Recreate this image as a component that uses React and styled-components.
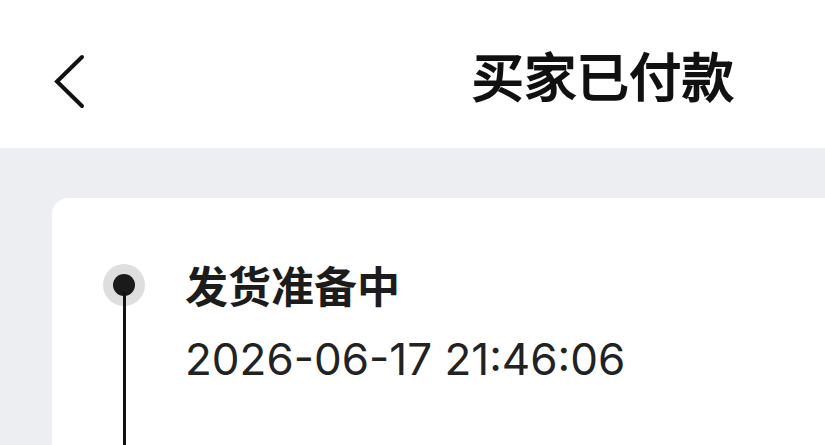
import React from 'react';
import styled, { createGlobalStyle } from 'styled-components';

const GlobalStyle = createGlobalStyle`
  html, body {
    margin: 0;
    padding: 0;
    background: #edeef1;
    overflow: hidden;
  }
  body {
    font-family: Inter, "Noto Sans CJK SC", sans-serif;
    color: #1a1a1a;
  }
`;

const Page = styled.div`
  width: 1206px;
  min-height: 445px;
  background: #edeef1;
`;

const Header = styled.header`
  height: 148px;
  background: #ffffff;
  display: grid;
  grid-template-columns: 1fr auto 1fr;
  align-items: center;
`;

const BackButton = styled.button`
  justify-self: start;
  display: flex;
  align-items: center;
  margin: 16px 0 0 54px;
  padding: 0;
  border: none;
  background: none;
  cursor: pointer;
`;

const Title = styled.h1`
  margin: 0;
  font-family: "Noto Sans CJK SC", sans-serif;
  font-size: 52px;
  font-weight: 400;
  -webkit-text-stroke: 2px #111;
  color: #111;
  letter-spacing: 0.5px;
`;

const Body = styled.main`
  padding: 50px 0 0 52px;
`;

const Card = styled.section`
  background: #ffffff;
  border-radius: 16px;
  padding: 66px 0 0 51px;
`;

const Step = styled.div`
  display: grid;
  grid-template-columns: 42px 1fr;
  column-gap: 40px;
`;

const Marker = styled.div`
  display: flex;
  flex-direction: column;
  align-items: center;
`;

const Ring = styled.div`
  width: 42px;
  height: 42px;
  border-radius: 50%;
  background: ${p => (p.$active ? '#dedede' : 'transparent')};
  display: flex;
  align-items: center;
  justify-content: center;
  flex: none;
`;

const Dot = styled.div`
  width: 22px;
  height: 22px;
  border-radius: 50%;
  background: #1a1a1a;
`;

const Line = styled.div`
  width: 3px;
  flex: 1;
  margin-top: -14px;
  background: #111;
`;

const Content = styled.div`
  padding-bottom: 90px;
`;

const StepTitle = styled.div`
  font-family: "Noto Sans CJK SC", sans-serif;
  font-size: 43px;
  font-weight: 700;
  line-height: 40px;
  color: #1c1c1c;
`;

const StepTime = styled.div`
  margin-top: 35px;
  font-size: 44px;
  line-height: 40px;
  color: #222;
`;

const ChevronLeft = () => (
  <svg width="32" height="56" viewBox="0 0 32 56" fill="none">
    <polyline
      points="28,3 3,27.5 28,52"
      stroke="#111"
      strokeWidth="4"
      strokeLinecap="round"
      strokeLinejoin="miter"
    />
  </svg>
);

const steps = [
  { title: '发货准备中', time: '2026-06-17 21:46:06', active: true },
];

export default function App() {
  return (
    <Page>
      <GlobalStyle />
      <Header>
        <BackButton aria-label="返回">
          <ChevronLeft />
        </BackButton>
        <Title>买家已付款</Title>
        <span />
      </Header>
      <Body>
        <Card>
          {steps.map(s => (
            <Step key={s.time}>
              <Marker>
                <Ring $active={s.active}>
                  <Dot />
                </Ring>
                <Line />
              </Marker>
              <Content>
                <StepTitle>{s.title}</StepTitle>
                <StepTime>{s.time}</StepTime>
              </Content>
            </Step>
          ))}
        </Card>
      </Body>
    </Page>
  );
}
